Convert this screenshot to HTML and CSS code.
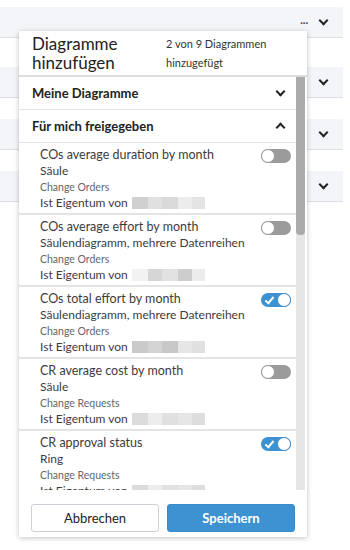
FILE: index.html
```html
<!DOCTYPE html>
<html lang="de">
<head>
  <meta charset="UTF-8" />
  <title>Diagramme hinzufügen</title>
  <link rel="stylesheet" href="styles.css">
</head>
<body>
  <div class="board">
    <div class="band band-first"><span class="dots">...</span><span class="chev"></span></div>
    <div class="band"><span class="chev"></span></div>
    <div class="band"><span class="chev"></span></div>
    <div class="band"><span class="chev"></span></div>
  </div>

  <div class="picker">
    <div class="picker-head">
      <div class="picker-title">Diagramme<br>hinzufügen</div>
      <div class="picker-count">2 von 9 Diagrammen<br>hinzugefügt</div>
    </div>

    <div class="picker-body">
      <div class="picker-list">
        <div class="section">
          <span>Meine Diagramme</span>
          <span class="chev"></span>
        </div>
        <div class="section">
          <span>Für mich freigegeben</span>
          <span class="chev up"></span>
        </div>

        <div class="item">
          <div class="item-text">
            <div class="item-title">COs average duration by month</div>
            <div class="item-type">Säule</div>
            <div class="item-cat">Change Orders</div>
            <div class="item-owner">Ist Eigentum von <span class="blur b1"></span></div>
          </div>
          <span class="toggle"></span>
        </div>

        <div class="item">
          <div class="item-text">
            <div class="item-title">COs average effort by month</div>
            <div class="item-type">Säulendiagramm, mehrere Datenreihen</div>
            <div class="item-cat">Change Orders</div>
            <div class="item-owner">Ist Eigentum von <span class="blur b2"></span></div>
          </div>
          <span class="toggle"></span>
        </div>

        <div class="item">
          <div class="item-text">
            <div class="item-title">COs total effort by month</div>
            <div class="item-type">Säulendiagramm, mehrere Datenreihen</div>
            <div class="item-cat">Change Orders</div>
            <div class="item-owner">Ist Eigentum von <span class="blur b3"></span></div>
          </div>
          <span class="toggle on"></span>
        </div>

        <div class="item">
          <div class="item-text">
            <div class="item-title">CR average cost by month</div>
            <div class="item-type">Säule</div>
            <div class="item-cat">Change Requests</div>
            <div class="item-owner">Ist Eigentum von <span class="blur b4"></span></div>
          </div>
          <span class="toggle"></span>
        </div>

        <div class="item">
          <div class="item-text">
            <div class="item-title">CR approval status</div>
            <div class="item-type">Ring</div>
            <div class="item-cat">Change Requests</div>
            <div class="item-owner">Ist Eigentum von <span class="blur b4"></span></div>
          </div>
          <span class="toggle on"></span>
        </div>
      </div>

      <div class="scrollbar"><div class="scroll-thumb"></div></div>
    </div>

    <div class="picker-foot">
      <button type="button" class="btn btn-cancel">Abbrechen</button>
      <button type="button" class="btn btn-save">Speichern</button>
    </div>
  </div>
</body>
</html>
```

FILE: styles.css
```css
:root {
  --text-color: #3c3c3c;
  --muted-color: #666;
  --line-color: #e2e4e8;
  --band-color: #f4f5f8;
  --blue: #3d92d1;
}

body {
  margin: 0;
  font-family: Lato, 'Noto Sans', sans-serif;
  color: var(--text-color);
  background: white;
}

/* page behind the popup */
.board {
  padding-top: 7px;
  margin-right: 7px;
}

.band {
  height: 30px;
  background-color: var(--band-color);
  border-bottom: 1px solid #dcdee3;
  display: flex;
  align-items: center;
  justify-content: flex-end;
  padding-right: 16px;
  margin-bottom: 21px;
}

.band-first {
  margin-bottom: 29px;
}

.dots {
  font-size: 11px;
  font-weight: bold;
  line-height: 1;
  margin-right: 12px;
  margin-top: -6px;
}

.chev {
  width: 5px;
  height: 5px;
  border-right: 2px solid #222;
  border-bottom: 2px solid #222;
  transform: rotate(45deg);
  margin-top: -3px;
}

.chev.up {
  transform: rotate(-135deg);
  margin-top: 3px;
}

/* popup */
.picker {
  position: absolute;
  left: 19px;
  top: 31px;
  width: 288px;
  height: 506px;
  background: white;
  box-shadow: 0 1px 5px rgba(0, 0, 0, 0.25);
  display: flex;
  flex-direction: column;
}

.picker-head {
  display: flex;
  align-items: flex-start;
  padding: 3px 12px 3px 13px;
  border-bottom: 2px solid #dadce0;
}

.picker-title {
  font-size: 17px;
  line-height: 19px;
  width: 134px;
  color: #222;
}

.picker-count {
  font-size: 11px;
  line-height: 19px;
  color: #333;
}

.picker-body {
  flex: 1;
  min-height: 0;
  display: flex;
  margin-right: 2px;
}

.picker-list {
  flex: 1;
  overflow: hidden;
}

.scrollbar {
  flex: none;
  width: 9px;
  background: #e6e6e6;
}

.scroll-thumb {
  height: 158px;
  background: #ababab;
  border-radius: 0 0 4px 4px;
}

.section {
  height: 32px;
  display: flex;
  align-items: center;
  justify-content: space-between;
  padding: 0 12px 0 13px;
  font-size: 13px;
  font-weight: bold;
  color: #222;
  border-bottom: 1px solid var(--line-color);
}

.item {
  display: flex;
  justify-content: space-between;
  align-items: flex-start;
  padding: 4px 5px 0 21px;
  height: 66px;
  border-bottom: 2px solid var(--line-color);
}

.item-text {
  flex: 1;
  min-width: 0;
  white-space: nowrap;
}

.item-title {
  font-size: 12.5px;
  line-height: 16px;
}

.item-type {
  font-size: 12px;
  line-height: 16px;
}

.item-cat {
  font-size: 10.5px;
  line-height: 16px;
  color: var(--muted-color);
}

.item-owner {
  font-size: 12px;
  line-height: 16px;
  display: flex;
  align-items: center;
  gap: 4px;
}

.blur {
  display: inline-block;
  width: 73px;
  height: 12px;
}

.b1 { background: linear-gradient(90deg, #d0d0d0 0 16px, #e0e0e0 16px 30px, #dadada 30px 46px, #ececec 46px 60px, #e4e4e4 60px); }
.b2 { background: linear-gradient(90deg, #f2f2f2 0 16px, #d6d6d6 16px 30px, #e2e2e2 30px 46px, #cdcdcd 46px 60px, #ececec 60px); }
.b3 { background: linear-gradient(90deg, #cacaca 0 16px, #d4d4d4 16px 30px, #c8c8c8 30px 46px, #e6e6e6 46px 60px, #e0e0e0 60px); }
.b4 { background: linear-gradient(90deg, #dcdcdc 0 16px, #ededed 16px 30px, #e0e0e0 30px 46px, #e6e6e6 46px 60px, #dddddd 60px); }

.toggle {
  position: relative;
  flex: none;
  width: 30px;
  height: 14px;
  margin-top: 2px;
  border-radius: 8px;
  background: #9b9b9b;
}

.toggle::after {
  content: '';
  position: absolute;
  left: 0;
  top: 0;
  width: 12px;
  height: 12px;
  border-radius: 50%;
  background: white;
  border: 1px solid #999;
}

.toggle.on {
  background: var(--blue);
}

.toggle.on::after {
  left: auto;
  right: 0;
  border-color: var(--blue);
}

.toggle.on::before {
  content: '';
  position: absolute;
  left: 6px;
  top: 2px;
  width: 3px;
  height: 7px;
  border-right: 2px solid white;
  border-bottom: 2px solid white;
  transform: rotate(40deg);
}

.picker-foot {
  display: flex;
  gap: 8px;
  padding: 14px 12px 5px 12px;
}

.btn {
  flex: 1;
  height: 28px;
  border-radius: 3px;
  font-family: inherit;
  font-size: 13px;
  cursor: pointer;
}

.btn-cancel {
  background: white;
  border: 1px solid #ccd0d6;
  color: #222;
}

.btn-save {
  background: var(--blue);
  border: 1px solid #3a8cc9;
  color: white;
  font-weight: bold;
}
```
